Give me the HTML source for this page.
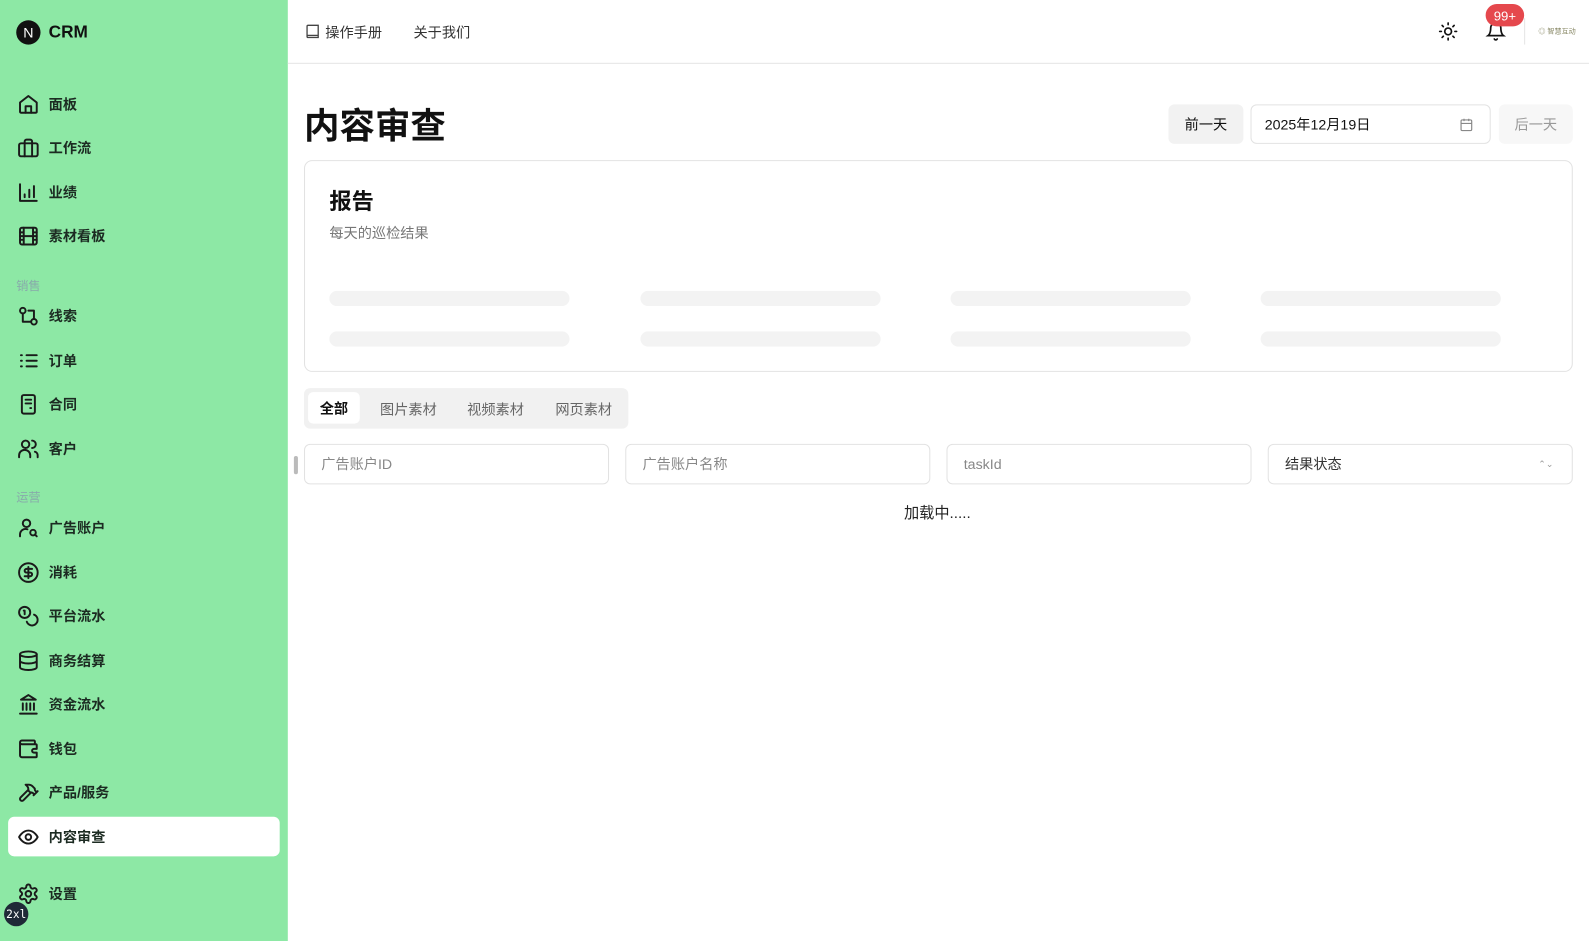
<!DOCTYPE html>
<html><head><meta charset="utf-8"><style>
*{box-sizing:border-box;margin:0;padding:0}
body{width:1589px;height:929px;overflow:hidden;font-family:"Liberation Sans","Noto Sans CJK SC",sans-serif;background:#fff;color:#111;position:relative}
#w{position:absolute;left:0;top:0;width:1568px;height:917px;transform:scale(1.01339);transform-origin:0 0}
.side{position:absolute;left:0;top:0;width:284px;height:929px;background:#8de8a5}
.logo{position:absolute;left:16px;top:20px;display:flex;align-items:center;gap:8px;font-weight:bold;font-size:17px}
.logo .c{width:24px;height:24px;border-radius:50%;background:#111;color:#fff;font-size:14px;display:flex;align-items:center;justify-content:center;font-weight:normal}
.it{position:absolute;left:8px;width:268px;height:39px;display:flex;align-items:center;padding-left:9px;gap:9px;font-size:14px;font-weight:bold;color:#1c2b22}
.it svg{width:22px;height:22px;fill:none;stroke:#1a1a1a;stroke-width:2.1;stroke-linecap:round;stroke-linejoin:round}
.it.act{background:#fff;border-radius:6px}
.sec{position:absolute;left:16px;font-size:12px;color:#8aa;}
.top{position:absolute;left:284px;top:0;right:0;height:63px;border-bottom:1px solid #e5e5e5}
.b{position:absolute;border-radius:6px;font-size:14px;display:flex;align-items:center}
.sk{position:absolute;height:15px;width:237px;background:#f3f3f3;border-radius:8px}
.in{position:absolute;top:438px;height:40px;width:301px;border:1px solid #e2e2e2;border-radius:6px;font-size:14px;color:#888;padding-left:16px;display:flex;align-items:center}
</style></head><body><div id="w">
<div class="side">
<div class="logo"><div class="c">N</div>CRM</div>
<div class="it" style="top:83px"><svg viewBox="0 0 24 24"><path d="M3 10l9-7 9 7v10a1 1 0 0 1-1 1H4a1 1 0 0 1-1-1z"/><path d="M9 21v-7h6v7"/></svg>面板</div>
<div class="it" style="top:126px"><svg viewBox="0 0 24 24"><rect x="2" y="7" width="20" height="14" rx="2"/><path d="M8 21V5a2 2 0 0 1 2-2h4a2 2 0 0 1 2 2v16"/></svg>工作流</div>
<div class="it" style="top:170px"><svg viewBox="0 0 24 24"><path d="M3 3v18h18M8 17v-3M13 17V9M18 17V5"/></svg>业绩</div>
<div class="it" style="top:213px"><svg viewBox="0 0 24 24"><rect x="3" y="3" width="18" height="18" rx="2"/><path d="M7 3v18M17 3v18M3 8h4M3 12h18M3 16h4M17 8h4M17 16h4"/></svg>素材看板</div>
<div class="sec" style="top:273px">销售</div>
<div class="it" style="top:292px"><svg viewBox="0 0 24 24"><circle cx="6" cy="6" r="3"/><circle cx="18" cy="18" r="3"/><path d="M6 9v9h9M18 15V6h-6"/></svg>线索</div>
<div class="it" style="top:336px"><svg viewBox="0 0 24 24"><path d="M10 6h11M10 12h11M10 18h11M4 6h1M4 12h1M4 18h1"/></svg>订单</div>
<div class="it" style="top:379px"><svg viewBox="0 0 24 24"><rect x="5" y="2" width="14" height="20" rx="2"/><path d="M9 7h6M9 11h6M14 16h1"/></svg>合同</div>
<div class="it" style="top:423px"><svg viewBox="0 0 24 24"><circle cx="9" cy="7" r="4"/><path d="M2 21v-2a6 6 0 0 1 12 0v2M16 3a4 4 0 0 1 0 8M22 21v-2a4 4 0 0 0-3-4"/></svg>客户</div>
<div class="sec" style="top:482px">运营</div>
<div class="it" style="top:501px"><svg viewBox="0 0 24 24"><circle cx="10" cy="7" r="4"/><path d="M3 21v-2a6 6 0 0 1 8-5.6"/><circle cx="17" cy="17" r="3"/><path d="M21 21l-2-2"/></svg>广告账户</div>
<div class="it" style="top:545px"><svg viewBox="0 0 24 24"><circle cx="12" cy="12" r="10"/><path d="M16 8h-6a2 2 0 0 0 0 4h4a2 2 0 0 1 0 4H8M12 6v12"/></svg>消耗</div>
<div class="it" style="top:588px"><svg viewBox="0 0 24 24"><circle cx="8" cy="8" r="6"/><path d="M18.1 10.4A6 6 0 1 1 10.3 18M7 6h1v4"/></svg>平台流水</div>
<div class="it" style="top:632px"><svg viewBox="0 0 24 24"><ellipse cx="12" cy="5" rx="9" ry="3"/><path d="M3 5v14c0 1.7 4 3 9 3s9-1.3 9-3V5M3 12c0 1.7 4 3 9 3s9-1.3 9-3"/></svg>商务结算</div>
<div class="it" style="top:675px"><svg viewBox="0 0 24 24"><path d="M3 22h18M6 18v-7M10 18v-7M14 18v-7M18 18v-7M12 2l8 5H4z"/></svg>资金流水</div>
<div class="it" style="top:719px"><svg viewBox="0 0 24 24"><path d="M19 7V4a1 1 0 0 0-1-1H5a2 2 0 0 0 0 4h15a1 1 0 0 1 1 1v4h-3a2 2 0 0 0 0 4h3v4a1 1 0 0 1-1 1H5a2 2 0 0 1-2-2V5"/></svg>钱包</div>
<div class="it" style="top:762px"><svg viewBox="0 0 24 24"><path d="M15 12l-8.4 8.4a2.1 2.1 0 0 1-3-3L12 9M17.6 15L22 10.6M20.9 11.7l-1.3-1.3a2.4 2.4 0 0 1-.7-1.7V7.8L16.4 5.3A5.6 5.6 0 0 0 12.4 3.6H9l.9.8a6 6 0 0 1 2.1 4.6V10l2 2h1.2a2.4 2.4 0 0 1 1.7.7l1.3 1.3"/></svg>产品/服务</div>
<div class="it act" style="top:806px"><svg viewBox="0 0 24 24"><path d="M2 12s3.5-7 10-7 10 7 10 7-3.5 7-10 7S2 12 2 12z"/><circle cx="12" cy="12" r="3"/></svg>内容审查</div>
<div class="it" style="top:862px"><svg viewBox="0 0 24 24"><circle cx="12" cy="12" r="3"/><path d="M12.2 2h-.4a2 2 0 0 0-2 2v.2a2 2 0 0 1-1 1.7l-.4.3a2 2 0 0 1-2 0l-.2-.1a2 2 0 0 0-2.7.7l-.2.4a2 2 0 0 0 .7 2.7l.2.1a2 2 0 0 1 1 1.7v.5a2 2 0 0 1-1 1.7l-.2.1a2 2 0 0 0-.7 2.7l.2.4a2 2 0 0 0 2.7.7l.2-.1a2 2 0 0 1 2 0l.4.3a2 2 0 0 1 1 1.7v.2a2 2 0 0 0 2 2h.4a2 2 0 0 0 2-2v-.2a2 2 0 0 1 1-1.7l.4-.3a2 2 0 0 1 2 0l.2.1a2 2 0 0 0 2.7-.7l.2-.4a2 2 0 0 0-.7-2.7l-.2-.1a2 2 0 0 1-1-1.7v-.5a2 2 0 0 1 1-1.7l.2-.1a2 2 0 0 0 .7-2.7l-.2-.4a2 2 0 0 0-2.7-.7l-.2.1a2 2 0 0 1-2 0l-.4-.3a2 2 0 0 1-1-1.7V4a2 2 0 0 0-2-2z"/></svg>设置</div>
<div style="position:absolute;left:4px;top:890px;width:24px;height:24px;border-radius:50%;background:#1f2937;color:#fff;font-size:11px;display:flex;align-items:center;justify-content:center;font-family:'DejaVu Sans Mono',monospace">2xl</div>
</div>
<div class="top">
<svg style="position:absolute;left:18px;top:24px" width="13" height="15" viewBox="0 0 13 15" fill="none" stroke="#444" stroke-width="1.3"><path d="M1 12V2a1 1 0 0 1 1-1h10v12H2a1 1 0 0 1-1-1zM1 12a1 1 0 0 1 1-1h10"/></svg>
<span style="position:absolute;left:37px;top:22px;font-size:14px;color:#333">操作手册</span>
<span style="position:absolute;left:124px;top:22px;font-size:14px;color:#333">关于我们</span>
<svg style="position:absolute;left:1135px;top:21px" width="20" height="20" viewBox="0 0 24 24" fill="none" stroke="#111" stroke-width="2" stroke-linecap="round"><circle cx="12" cy="12" r="4"/><path d="M12 2v2M12 20v2M4.9 4.9l1.4 1.4M17.7 17.7l1.4 1.4M2 12h2M20 12h2M6.3 17.7l-1.4 1.4M19.1 4.9l-1.4 1.4"/></svg>
<svg style="position:absolute;left:1182px;top:20px" width="20" height="22" viewBox="0 0 24 24" fill="none" stroke="#111" stroke-width="2" stroke-linecap="round"><path d="M6 8a6 6 0 0 1 12 0c0 7 3 9 3 9H3s3-2 3-9M10.3 21a1.9 1.9 0 0 0 3.4 0"/></svg>
<div style="position:absolute;left:1182px;top:4px;width:38px;height:22px;border-radius:11px;background:#e5484d;color:#fff;font-size:13px;display:flex;align-items:center;justify-content:center">99+</div>
<div style="position:absolute;left:1220px;top:18px;width:1px;height:26px;background:#e5e5e5"></div>
<span style="position:absolute;left:1234px;top:26px;font-size:7px;color:#886">◎ 智慧互动</span>
</div>
<div style="position:absolute;left:300px;top:96px;font-size:35px;font-weight:bold">内容审查</div>
<div class="b" style="left:1153px;top:103px;width:74px;height:39px;background:#f2f2f2;justify-content:center">前一天</div>
<div class="b" style="left:1234px;top:103px;width:237px;height:39px;border:1px solid #e2e2e2;padding-left:13px">2025年12月19日
<svg style="position:absolute;right:16px;top:12px" width="14" height="14" viewBox="0 0 24 24" fill="none" stroke="#888" stroke-width="2"><rect x="3" y="4" width="18" height="18" rx="2"/><path d="M16 2v4M8 2v4M3 10h18"/></svg></div>
<div class="b" style="left:1479px;top:103px;width:73px;height:39px;background:#f7f7f7;color:#999;justify-content:center">后一天</div>
<div style="position:absolute;left:300px;top:158px;width:1252px;height:209px;border:1px solid #e2e2e2;border-radius:8px">
<div style="position:absolute;left:24px;top:22px;font-size:22px;font-weight:bold">报告</div>
<div style="position:absolute;left:24px;top:61px;font-size:14px;color:#777">每天的巡检结果</div>
</div>
<div class="sk" style="left:325px;top:287px"></div><div class="sk" style="left:632px;top:287px"></div><div class="sk" style="left:938px;top:287px"></div><div class="sk" style="left:1244px;top:287px"></div>
<div class="sk" style="left:325px;top:327px"></div><div class="sk" style="left:632px;top:327px"></div><div class="sk" style="left:938px;top:327px"></div><div class="sk" style="left:1244px;top:327px"></div>
<div style="position:absolute;left:300px;top:383px;width:320px;height:40px;background:#f1f1f1;border-radius:6px;font-size:14px;color:#666">
<div style="position:absolute;left:4px;top:4px;width:51px;height:31px;background:#fff;border-radius:5px;color:#111;font-weight:bold;display:flex;align-items:center;justify-content:center">全部</div>
<span style="position:absolute;left:75px;top:11px">图片素材</span><span style="position:absolute;left:161px;top:11px">视频素材</span><span style="position:absolute;left:248px;top:11px">网页素材</span>
</div>
<div style="position:absolute;left:290px;top:450px;width:4px;height:18px;background:#bbb;border-radius:2px"></div>
<div class="in" style="left:300px">广告账户ID</div>
<div class="in" style="left:617px">广告账户名称</div>
<div class="in" style="left:934px">taskId</div>
<div class="in" style="left:1251px;color:#333">结果状态<span style="position:absolute;right:18px;font-size:9px;color:#999">⌃⌄</span></div>
<div style="position:absolute;left:892px;top:495px;font-size:15px;color:#222">加载中.....</div>
</div></body></html>
